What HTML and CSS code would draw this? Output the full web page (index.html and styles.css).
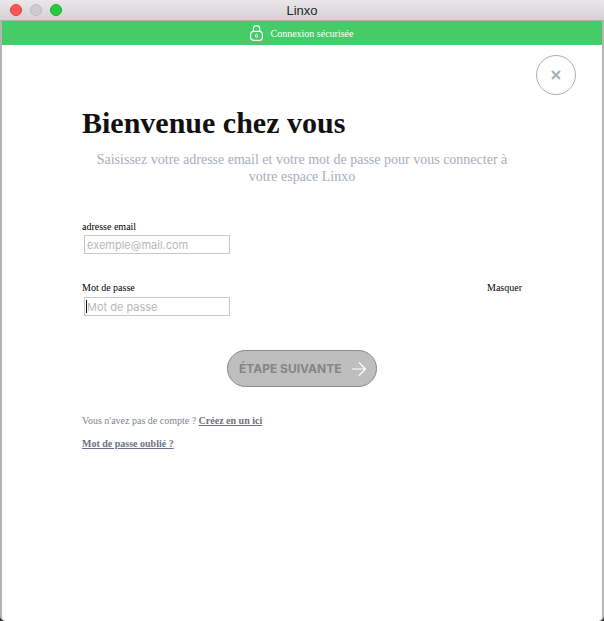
FILE: index.html
```html
<!DOCTYPE html>
<html lang="fr">
<head>
    <meta charset="UTF-8">
    <meta name="viewport" content="width=device-width, initial-scale=1.0">
    <title>Linxo</title>
    <link rel="stylesheet" href="styles.css">
</head>
<body>

    <div class="window">
        <!-- Title bar -->
        <div class="titlebar">
            <div class="lights">
                <span class="light light-red"></span>
                <span class="light light-grey"></span>
                <span class="light light-green"></span>
            </div>
            <div class="window-title">Linxo</div>
        </div>

        <!-- Secure banner -->
        <div class="secure-bar">
            <svg class="lock" width="13" height="16" viewBox="0 0 13 16" fill="none" stroke="#fff" stroke-width="1.2">
                <path d="M3.3 6.5V3.8a3.2 3.2 0 0 1 6.4 0v2.7"/>
                <rect x="0.6" y="6.3" width="11.8" height="9" rx="3.4"/>
                <ellipse cx="6.5" cy="10.8" rx="1" ry="1.6" stroke-width="1"/>
            </svg>
            <span>Connexion sécurisée</span>
        </div>

        <div class="content">
            <div class="close-row">
                <button class="close-btn">
                    <svg width="10" height="10" viewBox="0 0 10 10" stroke="#a9afbd" stroke-width="2.2">
                        <path d="M1 1l8 8M9 1l-8 8"/>
                    </svg>
                </button>
            </div>

            <h1>Bienvenue chez vous</h1>
            <p class="intro">Saisissez votre adresse email et votre mot de passe pour vous connecter à votre espace Linxo</p>

            <form class="login-form">
                <div class="field field-email">
                    <div class="field-head">
                        <label for="email">adresse email</label>
                    </div>
                    <input type="text" id="email" placeholder="exemple@mail.com">
                </div>

                <div class="field field-password">
                    <div class="field-head">
                        <label for="password">Mot de passe</label>
                        <span class="toggle">Masquer</span>
                    </div>
                    <div class="input-wrap">
                        <span class="caret"></span>
                        <input type="text" id="password" placeholder="Mot de passe">
                    </div>
                </div>

                <div class="submit-row">
                    <button type="button" class="next-btn">
                        <span>ÉTAPE SUIVANTE</span>
                        <svg width="16" height="16" viewBox="0 0 16 16" fill="none" stroke="#fff" stroke-width="1.2">
                            <path d="M1 8h13.5M8 1.5L14.5 8 8 14.5"/>
                        </svg>
                    </button>
                </div>
            </form>

            <p class="help">Vous n'avez pas de compte ? <a href="#">Créez en un ici</a></p>
            <p class="help help-last"><a href="#">Mot de passe oublié ?</a></p>
        </div>
    </div>

</body>
</html>
```

FILE: styles.css
```css
html, body {
    height: 100%;
}
body {
    margin: 0;
    font-family: "Liberation Serif", serif;
    background-color: #2a2a2a;
    overflow: hidden;
}
.window {
    height: 100%;
    display: flex;
    flex-direction: column;
    background-color: #fff;
    border-left: 2px solid #b5b5b5;
    border-right: 2px solid #b5b5b5;
    border-radius: 0 0 5px 5px;
    box-sizing: border-box;
}
.titlebar {
    height: 20px;
    margin: 0 -2px;
    position: relative;
    display: flex;
    align-items: center;
    justify-content: center;
    background: linear-gradient(#e9e7e9, #d4d2d4);
    border-bottom: 1px solid #b2b0b2;
}
.lights {
    position: absolute;
    left: 10px;
    top: 4px;
    display: flex;
    gap: 8px;
}
.light {
    width: 12px;
    height: 12px;
    border-radius: 50%;
    box-sizing: border-box;
}
.light-red {
    background-color: #fc5753;
    border: 1px solid #e0443e;
}
.light-grey {
    background-color: #cdcbcd;
    border: 1px solid #bebcbe;
}
.light-green {
    background-color: #2ac840;
    border: 1px solid #1dad2b;
}
.window-title {
    font-family: "Liberation Sans", sans-serif;
    font-size: 13px;
    color: #262626;
}
.secure-bar {
    height: 24px;
    display: flex;
    align-items: center;
    justify-content: center;
    gap: 7px;
    background-color: #45cb67;
    color: #fff;
    font-size: 10px;
}
.content {
    flex: 1;
    padding: 10px 26px 0 80px;
}
.close-row {
    display: flex;
    justify-content: flex-end;
}
.close-btn {
    width: 40px;
    height: 40px;
    padding: 0;
    display: flex;
    align-items: center;
    justify-content: center;
    background: none;
    border: 1px solid #a9afbd;
    border-radius: 50%;
}
h1 {
    margin: 11px 0 0;
    font-size: 30px;
    line-height: 34px;
    color: #111;
}
.intro {
    margin: 11px 0 0;
    padding-right: 54px;
    font-size: 14px;
    line-height: 17px;
    text-align: center;
    color: #a9adbd;
}
.login-form {
    margin-top: 36px;
}
.field {
    font-size: 10px;
    color: #000;
}
.field-email {
    margin-bottom: 28px;
}
.field-head {
    display: flex;
    justify-content: space-between;
    height: 14px;
    line-height: 12px;
    margin-right: 54px;
}
.field-password .field-head {
    height: 15px;
}
.field input {
    display: block;
    width: 146px;
    height: 19px;
    margin-left: 2px;
    padding: 0 2px;
    box-sizing: border-box;
    border: 1px solid #c8c8c8;
    border-radius: 0;
    outline: none;
    font-family: Inter, sans-serif;
    font-size: 11px;
    color: #333;
}
.field input::placeholder {
    color: #b8b8b8;
    opacity: 1;
}
.input-wrap {
    position: relative;
}
.caret {
    position: absolute;
    left: 4px;
    top: 3px;
    width: 1px;
    height: 13px;
    background-color: #111;
}
.submit-row {
    margin-top: 34px;
    padding-right: 54px;
    display: flex;
    justify-content: center;
}
.next-btn {
    width: 150px;
    height: 37px;
    padding: 0 9px 0 11px;
    display: flex;
    align-items: center;
    justify-content: space-between;
    background-color: #bebebe;
    border: 1px solid #8a8a8a;
    border-radius: 19px;
    font-family: Inter, sans-serif;
    font-size: 12px;
    font-weight: 700;
    color: #858585;
}
.help {
    margin: 27px 0 0;
    font-size: 10px;
    line-height: 14px;
    color: #7c8394;
}
.help-last {
    margin-top: 9px;
}
.help a {
    font-weight: 700;
    color: #6b7284;
}
```
